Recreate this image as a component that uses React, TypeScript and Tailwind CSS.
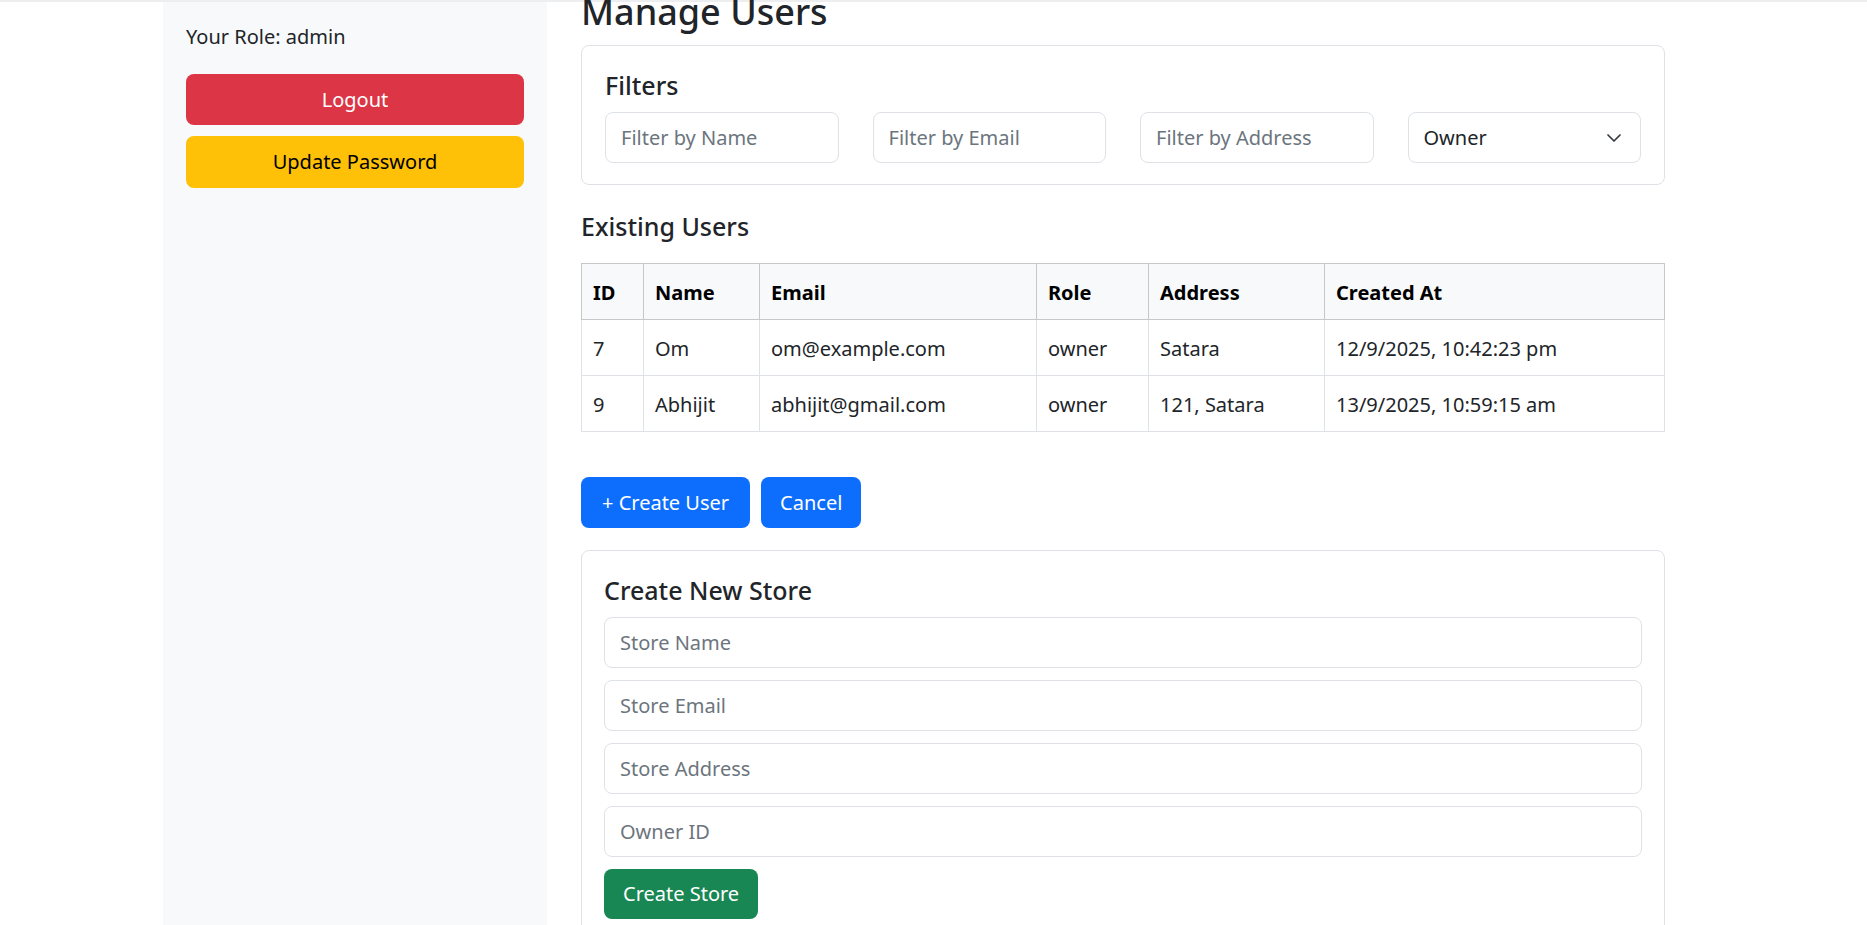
import React from "react";

const users = [
  { id: 7, name: "Om", email: "om@example.com", role: "owner", address: "Satara", created: "12/9/2025, 10:42:23 pm" },
  { id: 9, name: "Abhijit", email: "abhijit@gmail.com", role: "owner", address: "121, Satara", created: "13/9/2025, 10:59:15 am" },
];

const inputCls =
  "h-[51px] w-full rounded-[8px] border border-[#dee2e6] bg-white px-[15px] text-[20px] text-[#212529] placeholder:text-[#6c757d] outline-none";

export default function App() {
  return (
    <div
      className="h-[925px] overflow-hidden bg-white text-[#212529]"
      style={{ fontFamily: '"Noto Sans", "Open Sans", sans-serif' }}
    >
      <div className="h-[2px] bg-[#eceef0]" />
      <div className="flex h-[923px] pl-[163px]">
        {/* Sidebar */}
        <aside className="w-[384px] shrink-0 bg-[#f8f9fa] px-[23px] pt-[20px]">
          <p className="mb-[22px] text-[20px] leading-[30px]">Your Role: admin</p>
          <button className="mb-[11px] flex h-[51px] w-full items-center justify-center rounded-[8px] bg-[#dc3545] text-[20px] text-white">
            Logout
          </button>
          <button className="flex h-[52px] w-full items-center justify-center rounded-[8px] bg-[#ffc107] text-[20px] text-black">
            Update Password
          </button>
        </aside>

        {/* Main */}
        <main className="ml-[34px] w-[1084px] shrink-0">
          <h2 className="-mt-[14px] mb-[10px] text-[36px] font-medium leading-[47px]">Manage Users</h2>

          {/* Filters */}
          <div className="rounded-[8px] border border-[#dee2e6] px-[23px] pt-[24px] pb-[21px]">
            <h5 className="mb-[12px] text-[25px] font-medium leading-[30px]">Filters</h5>
            <div className="grid grid-cols-4 gap-[34px]">
              <input className={inputCls} placeholder="Filter by Name" />
              <input className={inputCls} placeholder="Filter by Email" />
              <input className={inputCls} placeholder="Filter by Address" />
              <div className="flex h-[51px] items-center justify-between rounded-[8px] border border-[#dee2e6] bg-white pl-[15px] pr-[18px] text-[20px]">
                <span>Owner</span>
                <svg width="16" height="12" viewBox="0 0 16 12" fill="none">
                  <path d="m2 3 6 6 6-6" stroke="#343a40" strokeWidth="1.7" strokeLinecap="round" strokeLinejoin="round" />
                </svg>
              </div>
            </div>
          </div>

          {/* Existing users */}
          <h4 className="mt-[26px] mb-[22px] text-[25px] font-medium leading-[30px]">Existing Users</h4>
          <table className="w-full table-fixed border-collapse text-[20px]">
            <colgroup>
              <col className="w-[62px]" />
              <col className="w-[116px]" />
              <col className="w-[277px]" />
              <col className="w-[112px]" />
              <col className="w-[176px]" />
              <col />
            </colgroup>
            <thead>
              <tr className="h-[56px] bg-[#f8f9fa] text-black">
                {["ID", "Name", "Email", "Role", "Address", "Created At"].map((h) => (
                  <th key={h} className="border border-[#c6c7c8] px-[11px] pt-[2px] text-left font-bold">
                    {h}
                  </th>
                ))}
              </tr>
            </thead>
            <tbody>
              {users.map((u) => (
                <tr key={u.id} className="h-[56px]">
                  <td className="border border-[#dee2e6] px-[11px] pt-[2px]">{u.id}</td>
                  <td className="border border-[#dee2e6] px-[11px] pt-[2px]">{u.name}</td>
                  <td className="border border-[#dee2e6] px-[11px] pt-[2px]">{u.email}</td>
                  <td className="border border-[#dee2e6] px-[11px] pt-[2px]">{u.role}</td>
                  <td className="border border-[#dee2e6] px-[11px] pt-[2px]">{u.address}</td>
                  <td className="border border-[#dee2e6] px-[11px] pt-[2px]">{u.created}</td>
                </tr>
              ))}
            </tbody>
          </table>

          {/* Actions */}
          <div className="mt-[45px] flex gap-[11px]">
            <button className="h-[51px] rounded-[8px] bg-[#0d6efd] px-[21px] text-[20px] text-white">+ Create User</button>
            <button className="h-[51px] rounded-[8px] bg-[#0d6efd] px-[19px] text-[20px] text-white">Cancel</button>
          </div>

          {/* Create store */}
          <div className="mt-[22px] rounded-[8px] border border-[#dee2e6] px-[22px] pt-[24px] pb-[22px]">
            <h5 className="mb-[12px] text-[25px] font-medium leading-[30px]">Create New Store</h5>
            <div className="flex flex-col gap-[12px]">
              <input className={inputCls} placeholder="Store Name" />
              <input className={inputCls} placeholder="Store Email" />
              <input className={inputCls} placeholder="Store Address" />
              <input className={inputCls} placeholder="Owner ID" />
              <div>
                <button className="h-[50px] rounded-[8px] bg-[#198754] px-[19px] text-[20px] text-white">Create Store</button>
              </div>
            </div>
          </div>
        </main>
      </div>
    </div>
  );
}
